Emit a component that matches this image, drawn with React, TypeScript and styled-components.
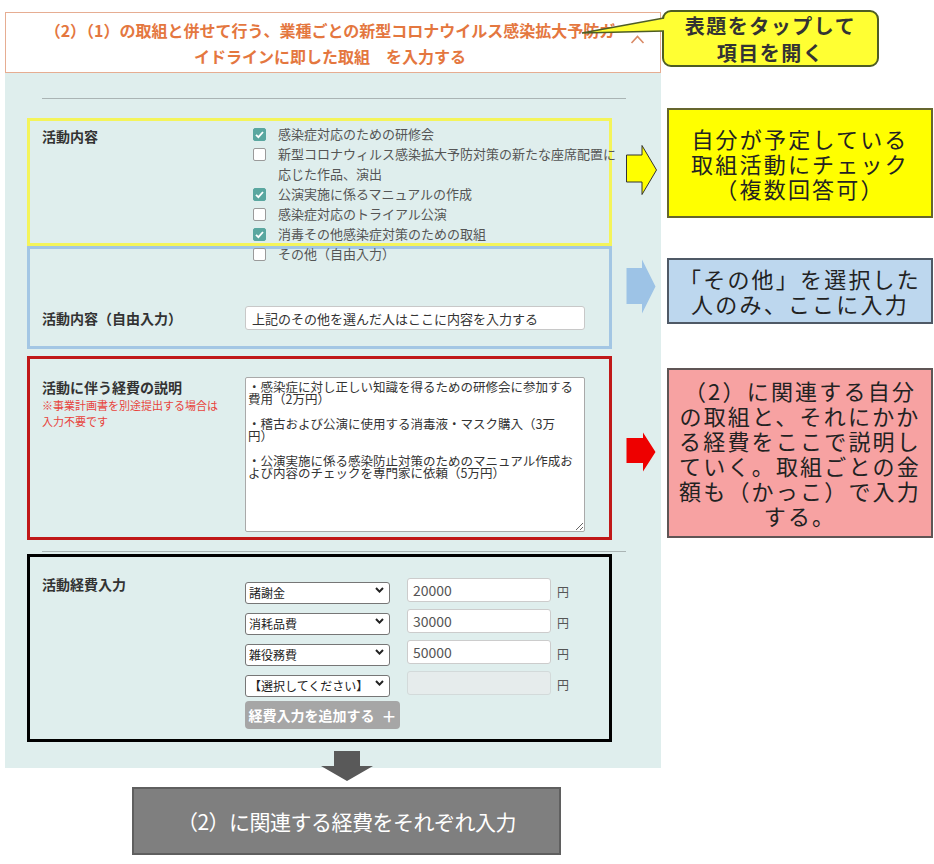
import React from 'react';
import styled, { createGlobalStyle } from 'styled-components';

const GlobalStyle = createGlobalStyle`
  html, body {
    margin: 0;
    padding: 0;
    background: #ffffff;
  }
  body {
    font-family: 'Noto Sans CJK JP', 'Noto Sans', sans-serif;
    color: #333333;
  }
  * {
    box-sizing: border-box;
  }
  input, select, textarea, button {
    font-family: inherit;
  }
`;

const activities = [
  { id: 1, label: '感染症対応のための研修会', checked: true },
  { id: 2, label: '新型コロナウィルス感染拡大予防対策の新たな座席配置に応じた作品、演出', checked: false },
  { id: 3, label: '公演実施に係るマニュアルの作成', checked: true },
  { id: 4, label: '感染症対応のトライアル公演', checked: false },
  { id: 5, label: '消毒その他感染症対策のための取組', checked: true },
  { id: 6, label: 'その他（自由入力）', checked: false },
];

const expenses = [
  { id: 1, category: '諸謝金', amount: '20000', disabled: false },
  { id: 2, category: '消耗品費', amount: '30000', disabled: false },
  { id: 3, category: '雑役務費', amount: '50000', disabled: false },
  { id: 4, category: '【選択してください】', amount: '', disabled: true },
];

const explanation =
  '・感染症に対し正しい知識を得るための研修会に参加する\n費用（2万円）\n\n' +
  '・稽古および公演に使用する消毒液・マスク購入（3万\n円）\n\n' +
  '・公演実施に係る感染防止対策のためのマニュアル作成お\nよび内容のチェックを専門家に依頼（5万円）';

function RightArrow({ w, h, shaftTop, shaftBottom, headX, fill, stroke }: {
  w: number; h: number; shaftTop: number; shaftBottom: number; headX: number; fill: string; stroke?: string;
}) {
  const d = `M0.5 ${shaftTop} H${headX} V0.5 L${w - 0.5} ${h / 2} L${headX} ${h - 0.5} V${shaftBottom} H0.5 Z`;
  return (
    <svg width={w} height={h} viewBox={`0 0 ${w} ${h}`}>
      <path d={d} fill={fill} stroke={stroke ?? 'none'} strokeWidth={1} />
    </svg>
  );
}

export default function App() {
  return (
    <Page>
      <GlobalStyle />
      <Form>
        <Header>
          <HeaderTitle>
            （2）（1）の取組と併せて行う、業種ごとの新型コロナウイルス感染拡大予防ガ
            <br />
            イドラインに即した取組　を入力する
          </HeaderTitle>
          <HeaderChevron width="15" height="9" viewBox="0 0 15 9">
            <path d="M1.5 8 L7.5 1.5 L13.5 8" fill="none" stroke="#d98a66" strokeWidth="1.6" />
          </HeaderChevron>
        </Header>

        <Panel>
          <Divider />

          <Section $border="#f4f45a" $height={128} $padTop={3} $mt={19}>
            <Label $mt={2}>活動内容</Label>
            <CheckList>
              {activities.map((a) => (
                <CheckItem key={a.id}>
                  <CheckBox $checked={a.checked}>
                    {a.checked && (
                      <svg width="11" height="11" viewBox="0 0 11 11">
                        <path d="M2 5.8 L4.4 8.2 L9 3" fill="none" stroke="#ffffff" strokeWidth="1.8" />
                      </svg>
                    )}
                  </CheckBox>
                  <CheckText>{a.label}</CheckText>
                </CheckItem>
              ))}
            </CheckList>
          </Section>

          <Section $border="#a3c6e4" $height={103} $padTop={57} $mt={0}>
            <Label $lh={24}>活動内容（自由入力）</Label>
            <TextInput readOnly value="上記のその他を選んだ人はここに内容を入力する" />
          </Section>

          <Section $border="#c01818" $height={184} $padTop={18} $mt={7}>
            <div>
              <Label>活動に伴う経費の説明</Label>
              <Note>
                ※事業計画書を別途提出する場合は
                <br />
                入力不要です
              </Note>
            </div>
            <TextArea readOnly value={explanation} />
          </Section>

          <Divider $mt={11} />

          <Section $border="#000000" $height={188} $padTop={21} $mt={2}>
            <Label $mt={-4}>活動経費入力</Label>
            <ExpenseList>
              {expenses.map((e) => (
                <ExpenseRow key={e.id}>
                  <SelectWrap>
                    <Select defaultValue={e.category}>
                      <option>{e.category}</option>
                    </Select>
                    <SelectChevron width="9" height="6" viewBox="0 0 9 6">
                      <path d="M1 1 L4.5 4.6 L8 1" fill="none" stroke="#222222" strokeWidth="2" />
                    </SelectChevron>
                  </SelectWrap>
                  <AmountInput readOnly value={e.amount} disabled={e.disabled} />
                  <Yen>円</Yen>
                </ExpenseRow>
              ))}
              <AddButton type="button">
                経費入力を追加する<Plus>＋</Plus>
              </AddButton>
            </ExpenseList>
          </Section>
        </Panel>

        <Bottom>
          <svg width="52" height="30" viewBox="0 0 52 30">
            <path d="M13 0 H39 V15 H52 L26 30 L0 15 H13 Z" fill="#595959" />
          </svg>
          <Summary>（2）に関連する経費をそれぞれ入力</Summary>
        </Bottom>
      </Form>

      <Callout>
        <CalloutTail width="88" height="40" viewBox="0 0 88 40">
          <path d="M87 8 L2 23 L87 21 Z" fill="#ffff33" />
          <path d="M84 8 L2 23 L84 21" fill="none" stroke="#4e5d23" strokeWidth="1.6" />
        </CalloutTail>
        表題をタップして
        <br />
        項目を開く
      </Callout>

      <Notes>
        <NoteRow $mt={0}>
          <ArrowSlot $dy={7}>
            <RightArrow w={31} h={50} shaftTop={10} shaftBottom={37} headX={16} fill="#ffff00" stroke="#333333" />
          </ArrowSlot>
          <NoteBox $bg="#ffff00" $border="#66662e" $height={110}>
            自分が予定している
            <br />
            取組活動にチェック
            <br />
            （複数回答可）
          </NoteBox>
        </NoteRow>
        <NoteRow $mt={40}>
          <ArrowSlot $dy={-5}>
            <RightArrow w={30} h={55} shaftTop={9} shaftBottom={45} headX={16} fill="#9dc3e6" />
          </ArrowSlot>
          <NoteBox $bg="#bdd7ee" $border="#4f5966" $height={66}>
            「その他」を選択した
            <br />
            人のみ、ここに入力
          </NoteBox>
        </NoteRow>
        <NoteRow $mt={44}>
          <ArrowSlot $dy={-1}>
            <RightArrow w={30} h={40} shaftTop={6} shaftBottom={31} headX={17} fill="#ee0000" />
          </ArrowSlot>
          <NoteBox $bg="#f7a2a2" $border="#5f5555" $height={170}>
            （2）に関連する自分
            <br />
            の取組と、それにかか
            <br />
            る経費をここで説明し
            <br />
            ていく。取組ごとの金
            <br />
            額も（かっこ）で入力
            <br />
            する。
          </NoteBox>
        </NoteRow>
      </Notes>
    </Page>
  );
}

const Page = styled.div`
  position: relative;
  width: 934px;
  height: 864px;
  padding: 12px 0 0 5px;
  overflow: hidden;
`;

const Form = styled.div`
  width: 656px;
`;

const Header = styled.div`
  display: flex;
  align-items: center;
  height: 61px;
  padding: 0 15px 0 24px;
  background: #ffffff;
  border: 1px solid #e6ad92;
`;

const HeaderTitle = styled.h2`
  flex: 1;
  margin: 0;
  font-size: 16px;
  line-height: 26px;
  font-weight: 700;
  color: #e4773f;
  text-align: center;
  white-space: nowrap;
`;

const HeaderChevron = styled.svg`
  flex-shrink: 0;
  margin-top: -7px;
`;

const Panel = styled.div`
  background: #dfeeed;
  padding: 25px 0 26px 22px;
`;

const Divider = styled.div<{ $mt?: number }>`
  width: 584px;
  height: 1px;
  margin: ${(p) => p.$mt ?? 0}px 0 0 15px;
  background: #aab4b4;
`;

const Section = styled.section<{ $border: string; $height: number; $padTop: number; $mt: number }>`
  display: grid;
  grid-template-columns: 203px 1fr;
  align-items: start;
  width: 585px;
  height: ${(p) => p.$height}px;
  margin-top: ${(p) => p.$mt}px;
  padding: ${(p) => p.$padTop}px 0 0 12px;
  border: 3px solid ${(p) => p.$border};
`;

const Label = styled.div<{ $mt?: number; $lh?: number }>`
  margin-top: ${(p) => p.$mt ?? 0}px;
  font-size: 14px;
  line-height: ${(p) => p.$lh ?? 20}px;
  font-weight: 700;
  color: #333333;
  white-space: nowrap;
`;

const Note = styled.div`
  font-size: 11px;
  line-height: 16px;
  color: #e8433c;
  white-space: nowrap;
`;

const CheckList = styled.div`
  display: flex;
  flex-direction: column;
  padding-left: 8px;
`;

const CheckItem = styled.label`
  display: flex;
  align-items: flex-start;
  gap: 12px;
`;

const CheckBox = styled.span<{ $checked: boolean }>`
  display: flex;
  align-items: center;
  justify-content: center;
  flex-shrink: 0;
  width: 13px;
  height: 13px;
  margin-top: 4px;
  border-radius: 2px;
  background: ${(p) => (p.$checked ? '#5aa7a0' : '#ffffff')};
  border: 1px solid ${(p) => (p.$checked ? '#5aa7a0' : '#9a9a9a')};
`;

const CheckText = styled.span`
  flex-shrink: 0;
  width: 340px;
  font-size: 13px;
  line-height: 20px;
  color: #555555;
`;

const TextInput = styled.input`
  width: 340px;
  height: 24px;
  padding: 0 6px;
  border: 1px solid #c8c8c8;
  border-radius: 3px;
  background: #ffffff;
  font-size: 13px;
  color: #333333;
  outline: none;
`;

const TextArea = styled.textarea`
  width: 340px;
  height: 155px;
  padding: 3px 2px;
  border: 1px solid #a9a9a9;
  border-radius: 2px;
  background: #ffffff;
  font-size: 12.5px;
  line-height: 12.3px;
  color: #333333;
  outline: none;
`;

const ExpenseList = styled.div`
  display: flex;
  flex-direction: column;
  gap: 7px;
`;

const ExpenseRow = styled.div`
  display: flex;
  align-items: center;
  height: 24px;
`;

const SelectWrap = styled.div`
  position: relative;
  width: 145px;
  height: 22px;
`;

const Select = styled.select`
  appearance: none;
  width: 100%;
  height: 100%;
  padding: 0 0 0 3px;
  border: 1px solid #767676;
  border-radius: 3px;
  background: #ffffff;
  font-size: 12px;
  color: #222222;
  outline: none;
`;

const SelectChevron = styled.svg`
  position: absolute;
  right: 6px;
  top: 8px;
  pointer-events: none;
`;

const AmountInput = styled.input`
  width: 144px;
  height: 24px;
  margin-left: 17px;
  padding: 0 5px;
  border: 1px solid #cccccc;
  border-radius: 3px;
  background: #ffffff;
  font-size: 14px;
  color: #555555;
  outline: none;

  &:disabled {
    background: #e6ecec;
    border-color: #d3dada;
  }
`;

const Yen = styled.span`
  margin: 3px 0 0 6px;
  font-size: 12px;
  color: #555555;
`;

const AddButton = styled.button`
  display: flex;
  align-items: center;
  justify-content: center;
  width: 155px;
  height: 28px;
  margin-top: -1px;
  padding: 0;
  border: none;
  border-radius: 4px;
  background: #a6a6a6;
  color: #ffffff;
  font-size: 14px;
  font-weight: 700;
`;

const Plus = styled.span`
  margin-left: 7px;
  font-size: 15px;
`;

const Bottom = styled.div`
  display: flex;
  flex-direction: column;
  align-items: center;
  width: 429px;
  margin: -17px 0 0 127px;
`;

const Summary = styled.div`
  display: flex;
  align-items: center;
  justify-content: center;
  width: 100%;
  height: 68px;
  margin-top: 6px;
  background: #7f7f7f;
  border: 2px solid #5f5f5f;
  color: #ffffff;
  font-size: 21px;
  letter-spacing: -0.5px;
  white-space: nowrap;
`;

const Callout = styled.div`
  position: absolute;
  left: 662px;
  top: 10px;
  width: 217px;
  height: 57px;
  display: flex;
  flex-direction: column;
  align-items: center;
  justify-content: center;
  background: #ffff33;
  border: 2px solid #4e5d23;
  border-radius: 9px;
  font-size: 20px;
  line-height: 27px;
  font-weight: 700;
  letter-spacing: 1.5px;
  color: #333333;
  text-align: center;
  white-space: nowrap;
`;

const CalloutTail = styled.svg`
  position: absolute;
  left: -84px;
  top: -2px;
`;

const Notes = styled.div`
  position: absolute;
  left: 626px;
  top: 108px;
  width: 308px;
  display: flex;
  flex-direction: column;
`;

const NoteRow = styled.div<{ $mt: number }>`
  display: flex;
  align-items: center;
  gap: 10px;
  margin-top: ${(p) => p.$mt}px;
`;

const ArrowSlot = styled.div<{ $dy: number }>`
  display: flex;
  width: 31px;
  transform: translateY(${(p) => p.$dy}px);
`;

const NoteBox = styled.div<{ $bg: string; $border: string; $height: number }>`
  display: flex;
  flex-direction: column;
  justify-content: center;
  width: 266px;
  height: ${(p) => p.$height}px;
  background: ${(p) => p.$bg};
  border: 2px solid ${(p) => p.$border};
  font-size: 22px;
  line-height: 25px;
  letter-spacing: 2.2px;
  color: #222222;
  text-align: center;
  white-space: nowrap;
`;
